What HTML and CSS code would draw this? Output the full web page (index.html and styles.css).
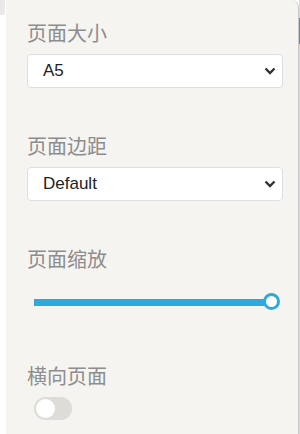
FILE: index.html
```html
<!DOCTYPE html>
<html lang="zh">
<head>
  <meta charset="UTF-8">
  <title>页面设置</title>
  <link rel="stylesheet" href="styles.css">
</head>
<body>

  <div class="layout">
    <div class="side">
      <div class="side-tab"></div>
    </div>

    <div class="panel">
      <div class="field">
        <div class="label">页面大小</div>
        <div class="select">
          <span>A5</span>
          <svg class="chevron" width="12" height="8" viewBox="0 0 12 8"><path d="M1.5 1.5 L6 6 L10.5 1.5" fill="none" stroke="#333" stroke-width="2.4"/></svg>
        </div>
      </div>

      <div class="field">
        <div class="label">页面边距</div>
        <div class="select">
          <span>Default</span>
          <svg class="chevron" width="12" height="8" viewBox="0 0 12 8"><path d="M1.5 1.5 L6 6 L10.5 1.5" fill="none" stroke="#333" stroke-width="2.4"/></svg>
        </div>
      </div>

      <div class="field">
        <div class="label">页面缩放</div>
        <div class="slider">
          <div class="slider-track"></div>
          <div class="slider-thumb"></div>
        </div>
      </div>

      <div class="field">
        <div class="label">横向页面</div>
        <div class="toggle">
          <div class="toggle-knob"></div>
        </div>
      </div>
    </div>

    <div class="edge">
      <div class="edge-mark"></div>
    </div>
  </div>

</body>
</html>
```

FILE: styles.css
```css
body {
  margin: 0;
  background: #fff;
  font-family: "Liberation Sans", "Noto Sans CJK SC", sans-serif;
  overflow: hidden;
}

.layout {
  display: flex;
  height: 434px;
}

.side {
  width: 6px;
  flex-shrink: 0;
}

.side-tab {
  height: 15px;
  width: 5px;
  background: #e9e9e9;
  border-bottom-right-radius: 2px;
}

.panel {
  flex: 1;
  background: #f5f4f1;
  border-right: 1px solid #c9c9c9;
  border-top-right-radius: 8px;
  padding: 20px 15px 0 21px;
}

.field {
  margin-bottom: 45px;
}

.label {
  font-family: "Noto Sans CJK SC", sans-serif;
  font-size: 20px;
  line-height: 26px;
  color: #8d8d8d;
  margin-bottom: 8px;
}

.select {
  display: flex;
  align-items: center;
  justify-content: space-between;
  box-sizing: border-box;
  height: 34px;
  padding: 0 6px 0 15px;
  background: #fff;
  border: 1px solid #dedede;
  border-radius: 4px;
  font-size: 17px;
  color: #222;
}

.slider {
  position: relative;
  height: 18px;
  margin: 21px 3px 0 7px;
  padding-bottom: 7px;
}

.slider-track {
  position: absolute;
  left: 0;
  right: 8px;
  top: 6px;
  height: 7px;
  background: #2fa8dc;
}

.slider-thumb {
  position: absolute;
  right: 0;
  top: 0;
  width: 11px;
  height: 11px;
  border: 3.5px solid #2fa8dc;
  border-radius: 50%;
  background: #fff;
}

.toggle {
  width: 38px;
  height: 23px;
  margin-left: 7px;
  border-radius: 12px;
  background: #dddcd9;
  display: flex;
  align-items: center;
  padding: 0 2px;
  box-sizing: border-box;
}

.toggle-knob {
  width: 19px;
  height: 19px;
  border-radius: 50%;
  background: #fff;
}

.edge {
  width: 1px;
  background: #d8d8d8;
}

.edge-mark {
  margin-top: 18px;
  height: 26px;
  background: #5a8fb0;
}
```
